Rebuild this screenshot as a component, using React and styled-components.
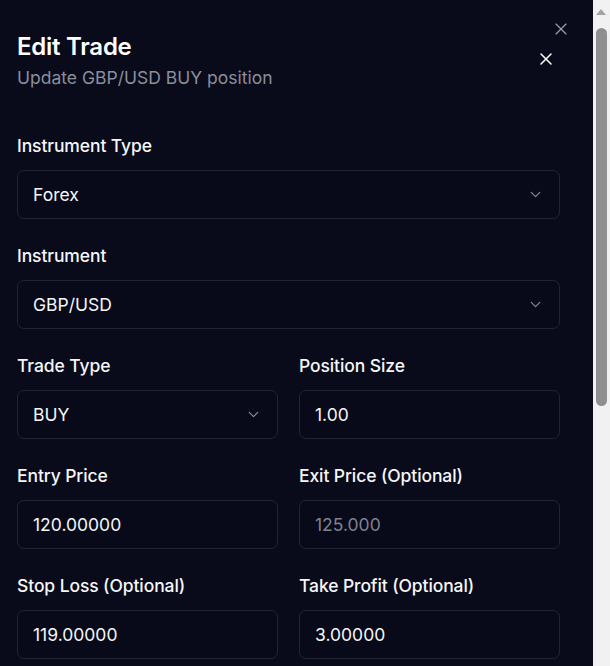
import React from "react";
import styled, { createGlobalStyle } from "styled-components";
import { X, ChevronDown } from "lucide-react";

const GlobalStyle = createGlobalStyle`
  html, body {
    margin: 0;
    background: #090b1b;
  }
  body {
    font-family: Inter, "Noto Sans", sans-serif;
    color: #f5f6f8;
  }
  * {
    box-sizing: border-box;
  }
`;

const Page = styled.div`
  display: flex;
  height: 100vh;
  background: #090b1b;
`;

const Content = styled.div`
  flex: 1;
  overflow: hidden;
`;

/* browser scrollbar, drawn since the window shows one */
const ScrollRail = styled.div`
  width: 17px;
  flex-shrink: 0;
  background: #f1f1f1;
  display: flex;
  flex-direction: column;
  align-items: center;
  padding-top: 9px;
`;

const ArrowUp = styled.div`
  width: 0;
  height: 0;
  border-left: 5px solid transparent;
  border-right: 5px solid transparent;
  border-bottom: 6px solid #a3a3a3;
  margin-left: -1px;
`;

const Thumb = styled.div`
  width: 11px;
  height: 378px;
  margin-top: 13px;
  margin-left: -1px;
  border-radius: 6px;
  background: #8f8f8f;
`;

const Dialog = styled.div`
  position: relative;
  padding: 33px 17px 60px 17px;
  max-width: 577px;
`;

const Header = styled.div`
  display: flex;
  justify-content: space-between;
  align-items: flex-start;
  margin-bottom: 47px;
`;

const Title = styled.h2`
  margin: 0;
  font-size: 24px;
  line-height: 28px;
  font-weight: 600;
  letter-spacing: -0.25px;
  color: #ffffff;
`;

const Subtitle = styled.p`
  margin: 6px 0 0;
  font-size: 17.5px;
  line-height: 22px;
  color: #8a8f9c;
`;

const IconButton = styled.button`
  background: none;
  border: 0;
  padding: 0;
  display: flex;
  color: ${(p) => p.$color || "#ffffff"};
  cursor: pointer;
`;

const CornerClose = styled(IconButton)`
  position: absolute;
  top: 19px;
  right: 6px;
`;

const HeaderClose = styled(IconButton)`
  margin-top: 16px;
  margin-right: 4px;
`;

const Form = styled.div`
  display: flex;
  flex-direction: column;
  gap: 27px;
`;

const Row = styled.div`
  display: grid;
  grid-template-columns: 1fr 1fr;
  gap: 21px;
`;

const Field = styled.div`
  display: flex;
  flex-direction: column;
  gap: 14px;
`;

const Label = styled.label`
  font-size: 17.5px;
  line-height: 20px;
  font-weight: 500;
  letter-spacing: -0.1px;
  color: #f5f6f8;
`;

const Box = styled.div`
  height: 49px;
  border: 1px solid #1f2633;
  border-radius: 7px;
  background: #080a19;
  padding: 0 15px 0 15px;
  display: flex;
  align-items: center;
  justify-content: space-between;
  font-size: 17.5px;
  color: ${(p) => (p.$placeholder ? "#7d8290" : "#f5f6f8")};
`;

const TextArea = styled(Box)`
  height: 120px;
  align-items: flex-start;
  padding-top: 14px;
`;

const Chevron = styled(ChevronDown)`
  color: #8a8f9c;
`;

const Footer = styled.div`
  display: flex;
  justify-content: flex-end;
  gap: 12px;
  margin-top: 12px;
`;

const Button = styled.button`
  height: 46px;
  padding: 0 20px;
  border-radius: 7px;
  font-family: inherit;
  font-size: 16px;
  font-weight: 500;
  border: 1px solid ${(p) => (p.$primary ? "#f5f6f8" : "#1f2633")};
  background: ${(p) => (p.$primary ? "#f5f6f8" : "transparent")};
  color: ${(p) => (p.$primary ? "#0b0d1c" : "#f5f6f8")};
`;

function SelectField({ label, value }) {
  return (
    <Field>
      <Label>{label}</Label>
      <Box>
        <span>{value}</span>
        <Chevron size={17} strokeWidth={1.6} />
      </Box>
    </Field>
  );
}

function InputField({ label, value, placeholder }) {
  return (
    <Field>
      <Label>{label}</Label>
      <Box $placeholder={!value}>{value || placeholder}</Box>
    </Field>
  );
}

export default function App() {
  return (
    <>
      <GlobalStyle />
      <Page>
        <Content>
          <Dialog>
            <CornerClose $color="#9a9ea8" aria-label="Close">
              <X size={20} strokeWidth={1.4} />
            </CornerClose>
            <Header>
              <div>
                <Title>Edit Trade</Title>
                <Subtitle>Update GBP/USD BUY position</Subtitle>
              </div>
              <HeaderClose aria-label="Close">
                <X size={20} strokeWidth={1.8} />
              </HeaderClose>
            </Header>
            <Form>
              <SelectField label="Instrument Type" value="Forex" />
              <SelectField label="Instrument" value="GBP/USD" />
              <Row>
                <SelectField label="Trade Type" value="BUY" />
                <InputField label="Position Size" value="1.00" />
              </Row>
              <Row>
                <InputField label="Entry Price" value="120.00000" />
                <InputField label="Exit Price (Optional)" placeholder="125.000" />
              </Row>
              <Row>
                <InputField label="Stop Loss (Optional)" value="119.00000" />
                <InputField label="Take Profit (Optional)" value="3.00000" />
              </Row>
              <Row>
                <InputField label="Entry Date" value="2024-05-12" />
                <InputField label="Exit Date (Optional)" placeholder="yyyy-mm-dd" />
              </Row>
              <Field>
                <Label>Notes (Optional)</Label>
                <TextArea $placeholder>Add any notes about this trade...</TextArea>
              </Field>
              <Footer>
                <Button>Cancel</Button>
                <Button $primary>Update Trade</Button>
              </Footer>
            </Form>
          </Dialog>
        </Content>
        <ScrollRail>
          <ArrowUp />
          <Thumb />
        </ScrollRail>
      </Page>
    </>
  );
}
